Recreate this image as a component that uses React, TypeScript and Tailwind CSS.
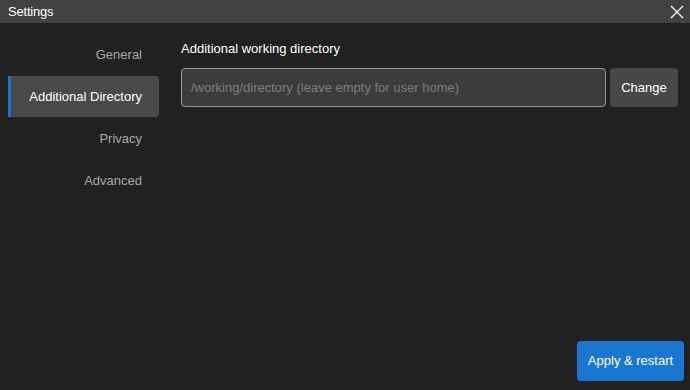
import React from 'react';

const navItems = ['General', 'Additional Directory', 'Privacy', 'Advanced'];

export default function App() {
  const active = 'Additional Directory';
  return (
    <div
      className="w-[690px] h-[390px] flex flex-col bg-[#212121] text-[#e0e0e0] overflow-hidden"
      style={{ fontFamily: '"Liberation Sans", Arial, sans-serif' }}
    >
      <div className="h-[23px] shrink-0 bg-[#424242] flex items-center justify-between pl-[8px] pr-[6px]">
        <span className="text-[13px] text-white tracking-[-0.2px]">Settings</span>
        <svg width="14" height="14" viewBox="0 0 14 14" className="mt-[1px]">
          <path d="M1 1L13 13M13 1L1 13" stroke="#ffffff" strokeWidth="1.3" fill="none" />
        </svg>
      </div>

      <div className="flex-1 flex">
        <div className="w-[159px] shrink-0 pl-[8px] pt-[11px] flex flex-col gap-[1px]">
          {navItems.map((item) => (
            <div
              key={item}
              className={
                item === active
                  ? 'h-[41px] flex items-center justify-end pr-[17px] rounded-r-[4px] bg-[#4a4a4a] border-l-[3px] border-[#1976d2] text-[13px] text-white'
                  : 'h-[41px] flex items-center justify-end pr-[17px] text-[13px] text-[#a8a8a8]'
              }
            >
              {item}
            </div>
          ))}
        </div>

        <div className="flex-1 flex flex-col pl-[22px] pr-[12px] pt-[18px] pb-[9px]">
          <div className="text-[13px] text-white leading-[16px]">Additional working directory</div>
          <div className="flex gap-[4px] mt-[11px]">
            <input
              className="flex-1 h-[39px] rounded-[4px] border border-[#9a9a9a] bg-[#3c3c3c] px-[9px] text-[13px] text-white placeholder-[#7c7c7c] outline-none"
              placeholder="/working/directory (leave empty for user home)"
            />
            <button className="w-[68px] h-[39px] rounded-[4px] bg-[#484848] text-[13px] text-white">
              Change
            </button>
          </div>
          <div className="flex-1" />
          <div className="flex justify-end">
            <button className="mr-[-6px] w-[107px] h-[40px] rounded-[4px] bg-[#1976d2] text-[13px] text-white">
              Apply &amp; restart
            </button>
          </div>
        </div>
      </div>
    </div>
  );
}
